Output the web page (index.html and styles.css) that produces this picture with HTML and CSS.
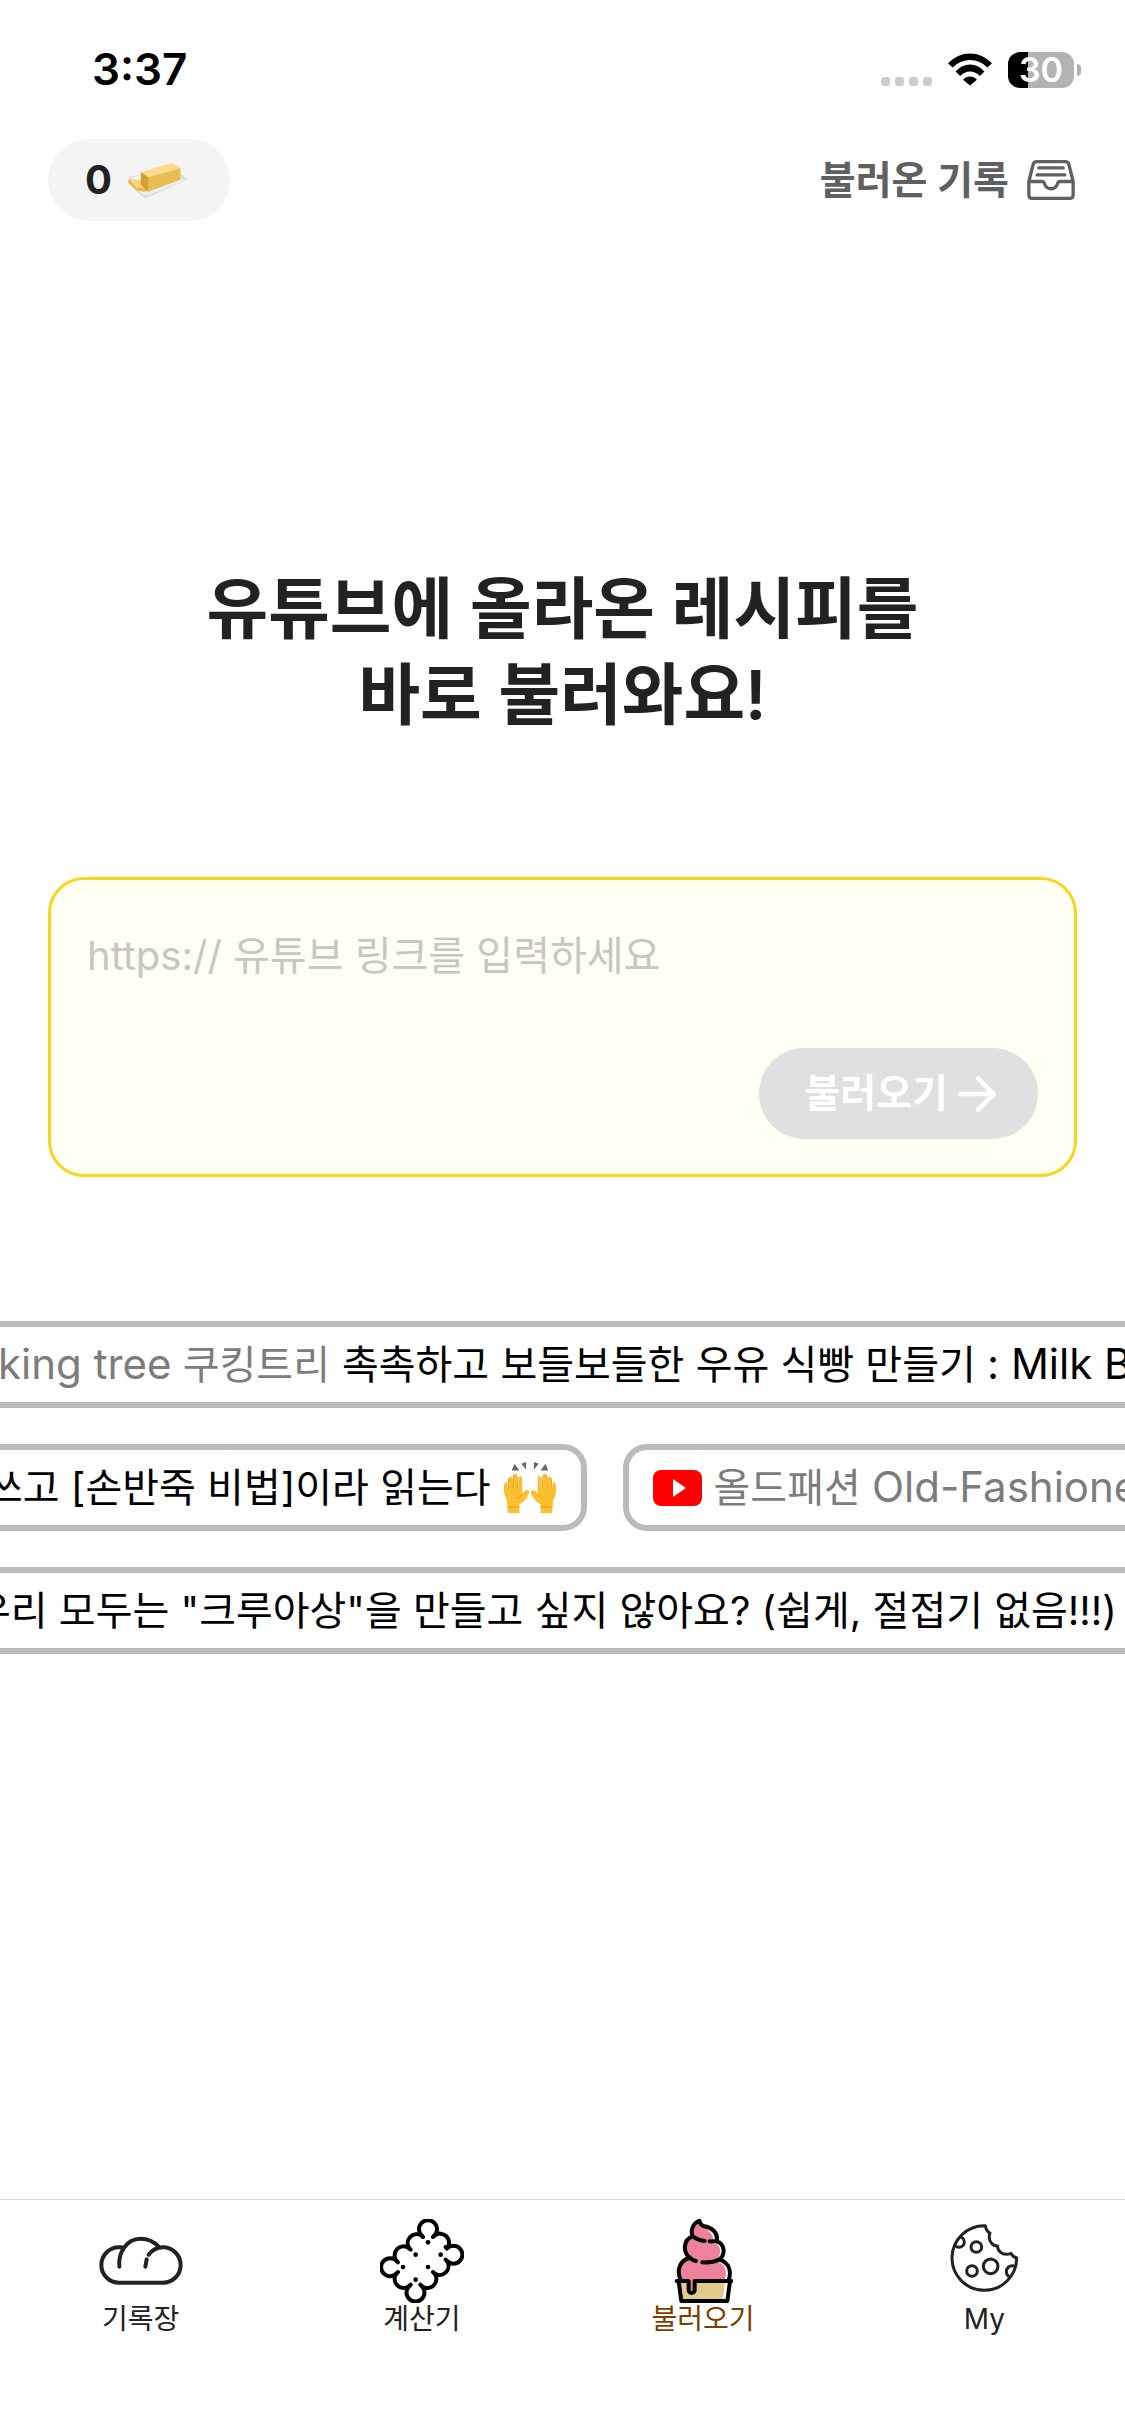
FILE: index.html
```html
<!DOCTYPE html>
<html lang="ko">
<head>
<meta charset="utf-8">
<meta name="viewport" content="width=device-width, initial-scale=1">
<title>레시피 불러오기</title>
<link rel="stylesheet" href="styles.css">
</head>
<body>
<div class="app">
  <div class="status">
    <span class="status-time">3:37</span>
    <div class="status-icons">
      <span class="signal"><i></i><i></i><i></i><i></i></span>
      <svg class="wifi" viewBox="0 0 134 98" aria-hidden="true">
        <path d="M0 30Q29 0 67 0T134 30L120 43Q98 20 67 20T14 43Z"/>
        <path d="M23 55Q42 34 67 34T111 55L97 69Q84 55 67 55T37 69Z"/>
        <path d="M46 80Q55 70 67 70T88 80L67 98Z"/>
      </svg>
      <span class="battery"><span class="battery-body">30</span><span class="battery-cap"></span></span>
    </div>
  </div>

  <header class="topbar">
    <button class="points" type="button">
      <span>0</span>
      <svg class="butter" viewBox="0 0 180 112" role="img" aria-label="버터">
        <path fill="#dcdfe2" d="M4 44L40 38L158 34L180 54L62 106Q48 112 40 102L0 64Z"/>
        <path fill="#eef0f1" d="M10 46L40 40V80L56 92L160 52L172 56L60 100L44 98L4 62Z"/>
        <path fill="#e8b84a" d="M0 54L38 60L58 82L50 90L24 86L0 62Z"/>
        <path fill="#f7d777" d="M2 50L36 56L56 78L24 78Z"/>
        <path fill="#f9dd8c" d="M38 30L132 2L158 18L62 46Z"/>
        <path fill="#e9bd50" d="M62 46L158 18V54L60 90Z"/>
        <path fill="#d79f2f" d="M38 30L62 46L60 90L38 68Z"/>
      </svg>
    </button>
    <a class="history" href="#history">
      <span>불러온 기록</span>
      <svg class="tray" viewBox="0 0 144 121" aria-hidden="true">
        <path d="M5 65L18 13Q20 5 29 5H115Q124 5 126 13L139 65V106Q139 116 129 116H15Q5 116 5 106ZM5 65H44Q51 65 53 73Q57 87 72 87T91 73Q93 65 100 65H139M35 24H109M30 45H114"/>
      </svg>
    </a>
  </header>

  <main class="main">
    <h1 class="title">유튜브에 올라온 레시피를<br>바로 불러와요!</h1>

    <form class="link-form">
      <input class="link-input" type="url" aria-label="유튜브 링크" placeholder="https:// 유튜브 링크를 입력하세요">
      <button class="submit" type="submit" disabled>
        <span>불러오기</span>
        <svg class="arrow" viewBox="0 0 114 108" aria-hidden="true"><path d="M7 54H106M60 7L107 54L60 101"/></svg>
      </button>
    </form>

    <div class="ticker">
      <div class="lane" style="--scroll: 174px">
        <a class="chip" href="#milk-bread">
          <svg class="yt" viewBox="0 0 49 36" aria-hidden="true"><rect width="49" height="36" rx="8" fill="#f00"/><path fill="#fff" d="M20 9L33 18L20 27Z"/></svg>
          <span class="channel"><span class="latin">Cooking tree</span> 쿠킹트리</span>
          <span>촉촉하고 보들보들한 우유 식빵 만들기 <span class="latin">: Milk Bread</span></span>
        </a>
      </div>
      <div class="lane" style="--scroll: 44px">
        <a class="chip" href="#hand-kneading">
          <span>쓰고 [손반죽 비법]이라 읽는다</span>
          <svg class="hands" viewBox="0 0 56 60" preserveAspectRatio="none" role="img" aria-label="만세">
            <g fill="#666"><path d="M9 10L12 2L17 10ZM19 2L24 0V9ZM37 2L32 0V9ZM47 10L44 2L39 10Z"/></g>
            <g id="hand">
              <path fill="#fbc02d" d="M5 60L4 45Q0 38 1 29Q1 23 4 24L5 32L6 19Q8 15 10 19V30L11 15Q14 12 15 16L16 31L17 18Q20 15 20 20L20 38Q23 31 27 34Q28 37 24 43Q21 48 17 50V60Z"/>
              <path fill="none" stroke="#e69a1c" stroke-width="1" d="M5 32L6 19M10 30L11 15M15 31L16 17M20 38Q18 42 14 43M5 53H17"/>
            </g>
            <use href="#hand" transform="matrix(-1 0 0 1 56 0)"/>
          </svg>
        </a>
        <a class="chip" href="#old-fashioned">
          <svg class="yt" viewBox="0 0 49 36" aria-hidden="true"><rect width="49" height="36" rx="8" fill="#f00"/><path fill="#fff" d="M20 9L33 18L20 27Z"/></svg>
          <span class="channel">올드패션 <span class="latin">Old-Fashioned</span></span>
        </a>
      </div>
      <div class="lane" style="--scroll: 56px">
        <a class="chip" href="#croissant">
          <span>우리 모두는 "크루아상"을 만들고 싶지 않아요? (쉽게, 절접기 없음!!!)</span>
        </a>
      </div>
    </div>
  </main>

  <nav class="tabs">
    <a class="tab" href="#notes">
      <svg class="tab-icon" viewBox="0 0 252 252" aria-hidden="true">
        <path class="line ink" d="M68 85H60A53 53 0 0 0 60 191H192A53 53 0 0 0 192 85Q166 85 149 107M61 143C57 104 80 59 125 59C148 59 166 69 179 83M143 121L139 143"/>
      </svg>
      <span>기록장</span>
    </a>
    <a class="tab" href="#calculator">
      <svg class="tab-icon" viewBox="0 0 252 252" aria-hidden="true">
        <path class="line" d="M125 50A27 27 0 1 1 163 50A27 27 0 0 1 201 88A27 27 0 1 1 201 126A27 27 0 0 1 163 163A27 27 0 0 1 125 201A27 27 0 1 1 88 201A27 27 0 0 1 50 163A27 27 0 1 1 50 126A27 27 0 0 1 88 88A27 27 0 0 1 125 50Z"/>
        <path class="line" d="M125 50L129 54M163 50L159 54M201 88L197 84M201 126L197 122M163 163L159 159M125 201L121 197M88 201L92 197M50 163L54 159M50 126L54 130M88 88L92 92"/>
        <g><circle cx="144" cy="70" r="7"/><circle cx="107" cy="107" r="7"/><circle cx="182" cy="107" r="7"/><circle cx="69" cy="144" r="7"/><circle cx="144" cy="144" r="7"/><circle cx="107" cy="182" r="7"/></g>
      </svg>
      <span>계산기</span>
    </a>
    <a class="tab tab-active" href="#import" aria-current="page">
      <svg class="tab-icon" viewBox="0 0 252 252" aria-hidden="true">
        <path fill="#fff" d="M115 6C92 16 90 36 95 50C70 60 66 96 86 120C54 128 46 162 58 186H204C214 156 204 128 180 122C194 100 190 76 170 66C170 40 158 26 124 21Z"/>
        <path fill="#ee829b" d="M112 10C92 20 92 36 97 50C70 60 66 96 86 120C54 128 48 162 58 186H190C202 160 192 134 166 126C182 106 182 80 158 66C156 44 146 34 112 14Z"/>
        <path fill="#fff" d="M53 186H207L199 245H61Z"/>
        <path fill="#e1ca8c" d="M53 186H192L185 245H61Z"/>
        <path fill="#ee829b" d="M83 184H101V216A9 9 0 0 1 83 216Z"/>
        <path class="line" d="M131 66Q112 64 95 52C88 36 94 14 115 5Q118 17 127 21C154 26 170 40 168 65Q158 68 146 67M95 52C66 62 66 98 84 114Q94 124 105 126M168 67C192 76 194 106 175 122Q154 132 124 130M84 117C54 126 46 158 60 184M177 122C204 132 212 156 203 184M47 186H83V213A9 9 0 0 0 101 213V186H211M53 187L61 246H199L207 187"/>
      </svg>
      <span>불러오기</span>
    </a>
    <a class="tab" href="#my">
      <svg class="tab-icon" viewBox="0 0 252 252" aria-hidden="true">
        <clipPath id="cookie"><circle cx="127" cy="117" r="97"/></clipPath>
        <path class="line thin" d="M130 20A97 97 0 1 0 224 116Q213 115 207 103Q188 110 176 100Q166 92 167 81Q156 82 148 72Q138 58 144 42Q133 37 130 20Z"/>
        <g class="line thin"><circle cx="103" cy="84" r="16"/><circle cx="146" cy="142" r="22"/><circle cx="90" cy="156" r="16"/>
        <g clip-path="url(#cookie)"><circle cx="51" cy="69" r="16"/><circle cx="211" cy="158" r="18"/></g></g>
      </svg>
      <span>My</span>
    </a>
  </nav>
</div>
</body>
</html>
```
FILE: styles.css
```css
* { box-sizing: border-box; }

body {
  margin: 0;
  background: #fff;
  color: #222;
  font-family: Inter, "Noto Sans CJK KR", sans-serif;
  line-height: 1.2;
}

a { color: inherit; text-decoration: none; }
button, input { font: inherit; border: 0; }
svg { display: block; flex: none; }

.app {
  display: flex;
  flex-direction: column;
  min-height: 100vh;
}

/* Status bar */
.status {
  display: flex;
  align-items: center;
  justify-content: space-between;
  height: 139px;
  padding: 0 44px 0 92px;
  color: #000;
}
.status-time { font-size: 44px; font-weight: 600; }
.status-icons { display: flex; align-items: center; gap: 16px; }
.signal { display: flex; gap: 5px; padding-top: 24px; }
.signal i { width: 9px; height: 9px; border-radius: 3px; background: #ccc; }
.wifi { width: 44px; height: 33px; }
.battery { display: flex; align-items: center; gap: 3px; }
.battery-body {
  width: 66px;
  border-radius: 12px;
  background: linear-gradient(90deg, #000 30%, #b3b3b3 30%);
  color: #fff;
  font-size: 34px;
  font-weight: 600;
  line-height: 36px;
  text-align: center;
}
.battery-cap { width: 4px; height: 12px; border-radius: 0 6px 6px 0; background: #b3b3b3; }

/* Top bar */
.topbar {
  display: flex;
  align-items: center;
  justify-content: space-between;
  padding: 0 50px 0 48px;
}
.points {
  display: flex;
  align-items: center;
  gap: 16px;
  height: 82px;
  padding: 0 42px 0 37px;
  border-radius: 41px;
  background: #f4f4f4;
  color: #222;
  font-size: 40px;
  font-weight: 700;
}
.butter { width: 60px; height: 37px; }
.history {
  display: flex;
  align-items: center;
  gap: 18px;
  color: #606060;
  font-size: 39px;
  font-weight: 600;
}
.tray { width: 48px; height: 40px; }
.tray path, .arrow path {
  fill: none;
  stroke: currentColor;
  stroke-width: 10;
  stroke-linecap: round;
  stroke-linejoin: round;
}

/* Main */
.main { padding-top: 345px; }
.title {
  margin: 0;
  font-size: 67px;
  font-weight: 600;
  line-height: 86px;
  text-align: center;
}
.link-form {
  display: flex;
  flex-direction: column;
  gap: 63px;
  margin: 139px 48px 144px;
  padding: 45px 36px 35px;
  border: 3px solid #f7d71c;
  border-radius: 36px;
  background: #fffff3;
}
.link-input {
  width: 100%;
  height: 60px;
  padding: 0;
  background: transparent;
  font-size: 40px;
  outline: 0;
}
.link-input::placeholder { color: #c7c7c0; opacity: 1; }
.submit {
  display: flex;
  align-items: center;
  align-self: flex-end;
  gap: 10px;
  height: 91px;
  padding: 0 42px 0 45px;
  border-radius: 46px;
  background: #e0e0e0;
  color: #fff;
  font-size: 39px;
  font-weight: 600;
}
.arrow { width: 38px; height: 36px; }
.arrow path { stroke-width: 14; }

/* Scrolling suggestions */
.ticker {
  display: flex;
  flex-direction: column;
  gap: 36px;
  overflow: hidden;
}
.lane {
  display: flex;
  gap: 36px;
  width: max-content;
  margin-left: calc(-1 * var(--scroll));
}
.chip {
  display: flex;
  align-items: center;
  gap: 12px;
  height: 87px;
  padding: 0 24px;
  border: 6px solid #bbb;
  border-radius: 24px;
  color: #000;
  font-size: 40px;
  line-height: 60px;
  white-space: nowrap;
}
.latin { font-size: 42px; }
.channel { color: #7c7c7c; }
.yt { width: 49px; height: 36px; }
.hands { width: 54px; height: 51px; }

/* Tab bar */
.tabs {
  display: grid;
  grid-template-columns: repeat(4, 1fr);
  margin-top: auto;
  padding: 19px 0 101px;
  border-top: 1px solid #d9d9d9;
}
.tab {
  display: flex;
  flex-direction: column;
  align-items: center;
  font-size: 28px;
  line-height: 32px;
}
.tab-active { color: #7b3f00; }
.tab-icon { width: 84px; height: 84px; }
.line {
  fill: none;
  stroke: #000;
  stroke-width: 12;
  stroke-linecap: round;
  stroke-linejoin: round;
}
.ink { stroke: #222; }
.thin { stroke: #222; stroke-width: 9; }
```
